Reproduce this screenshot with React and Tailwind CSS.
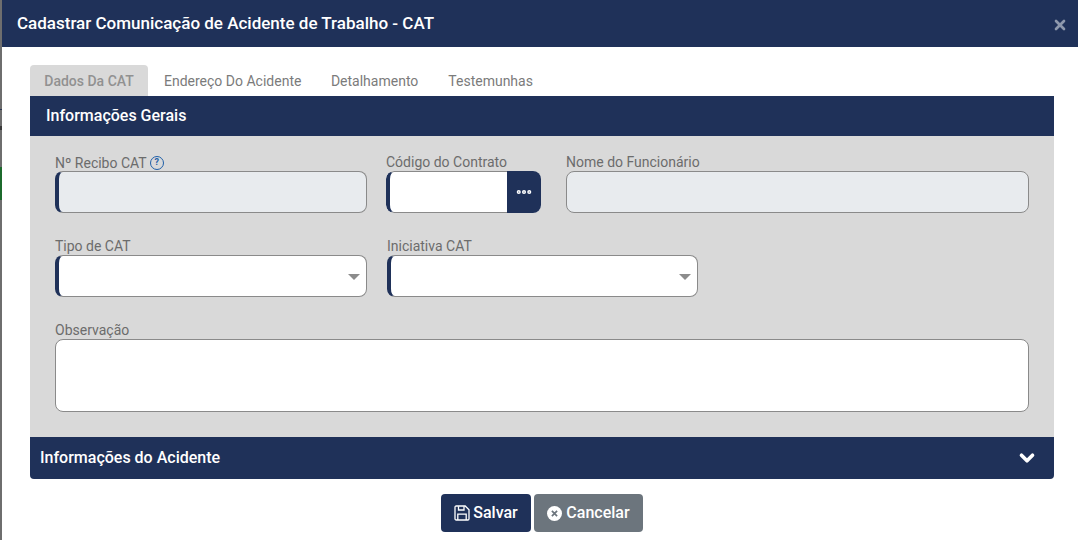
import { ChevronDown, Ellipsis, X } from 'lucide-react'

function Label({ children }) {
  return <label className="block h-[17px] text-sm leading-[17px] text-[#6c6c6c]">{children}</label>
}

function Field({ label, className, children }) {
  return (
    <div className={className}>
      <Label>{label}</Label>
      {children}
    </div>
  )
}

function SelectBox() {
  return (
    <div className="flex h-[42px] items-center justify-end rounded-lg border border-[#8a8a8a] border-l-4 border-l-[#1f3159] bg-white pr-[6px]">
      <span className="mt-px h-0 w-0 border-x-[6px] border-t-[6px] border-x-transparent border-t-[#8c8c8c]" />
    </div>
  )
}

function SaveIcon() {
  return (
    <svg width="16" height="16" viewBox="0 0 16 16" fill="none" stroke="white" strokeWidth="1.3">
      <path d="M1 2.2C1 1.5 1.5 1 2.2 1H11.2L15 4.8V13.8C15 14.5 14.5 15 13.8 15H2.2C1.5 15 1 14.5 1 13.8Z" />
      <path d="M4.5 1.2V5H10V1.2" />
      <path d="M3.8 15V9.2H12.2V15" />
    </svg>
  )
}

function CancelIcon() {
  return (
    <svg width="15" height="15" viewBox="0 0 15 15">
      <circle cx="7.5" cy="7.5" r="7.5" fill="white" />
      <path d="M4.9 4.9L10.1 10.1M10.1 4.9L4.9 10.1" stroke="#6c757d" strokeWidth="1.7" />
    </svg>
  )
}

export default function App() {
  return (
    <div className="flex h-[540px] w-[1078px] overflow-hidden bg-white font-['Roboto',sans-serif]">
      {/* page behind the modal, only a sliver shows */}
      <div className="flex w-[2px] shrink-0 flex-col bg-[#6e6e6e]">
        <div className="mt-[109px] h-px bg-[#2a3550]" />
        <div className="mt-[16px] h-[4px] bg-[#3a3a3a]" />
        <div className="mt-[37px] h-[33px] bg-[#1c6a2c]" />
      </div>

      <div className="flex min-w-0 flex-1 flex-col">
        <header className="flex h-[47px] shrink-0 items-center justify-between bg-[#1f3159] pl-[15px] pr-[10px]">
          <h1 className="text-[17px] font-medium text-white">Cadastrar Comunicação de Acidente de Trabalho - CAT</h1>
          <X size={16} strokeWidth={4} className="mt-[3px] text-[#8e98ac]" />
        </header>

        <main className="flex flex-col pl-[28px] pr-[24px] pt-[18px]">
          <nav className="flex h-[31px] items-stretch text-sm text-[#7b7b7b]">
            <span className="flex w-[118px] items-center justify-center rounded-t bg-[#d9d9d9] font-medium text-[#919191]">Dados Da CAT</span>
            <span className="ml-px flex items-center pl-[15px] pr-[14.5px]">Endereço Do Acidente</span>
            <span className="flex items-center px-[15px]">Detalhamento</span>
            <span className="flex items-center px-[15px]">Testemunhas</span>
          </nav>

          <section className="bg-[#d9d9d9]">
            <h2 className="flex h-[40px] items-center bg-[#1f3159] pl-4 text-base font-medium text-white">Informações Gerais</h2>

            <div className="flex flex-col gap-[25px] pl-[25px] pr-[25px] pt-[18px]">
              <div className="flex">
                <div className="w-[312px]">
                  <div className="flex h-[17px] items-center gap-[3px] text-sm text-[#6c6c6c]">
                    Nº Recibo CAT
                    <span className="flex h-[14px] w-[14px] items-center justify-center rounded-full border border-[#1f5fa8] text-[9px] font-bold text-[#1f5fa8]">?</span>
                  </div>
                  <div className="h-[42px] rounded-lg border border-[#8a8a8a] border-l-4 border-l-[#1f3159] bg-[#e8ebee]" />
                </div>
                <Field label="Código do Contrato" className="ml-[19px] w-[155px]">
                  <div className="flex h-[42px] overflow-hidden rounded-lg bg-white">
                    <div className="flex-1 rounded-l-lg border-y border-l-4 border-y-[#8a8a8a] border-l-[#1f3159]" />
                    <button className="flex w-[34px] items-center justify-center bg-[#1f3159] text-white">
                      <Ellipsis size={18} strokeWidth={3.5} />
                    </button>
                  </div>
                </Field>
                <Field label="Nome do Funcionário" className="ml-[25px] w-[463px]">
                  <div className="h-[42px] rounded-lg border border-[#8a8a8a] bg-[#e8ebee]" />
                </Field>
              </div>

              <div className="flex">
                <Field label="Tipo de CAT" className="w-[312px]">
                  <SelectBox />
                </Field>
                <Field label="Iniciativa CAT" className="ml-[20px] w-[311px]">
                  <SelectBox />
                </Field>
              </div>

              <Field label="Observação">
                <div className="h-[73px] rounded-lg border border-[#8a8a8a] bg-white" />
              </Field>
            </div>

            <div className="h-[25px]" />
          </section>

          <div className="flex h-[42px] items-center justify-between rounded-b bg-[#1f3159] pl-[10px] pr-[16px]">
            <h2 className="text-base font-medium text-white">Informações do Acidente</h2>
            <ChevronDown size={22} strokeWidth={4} className="text-white" />
          </div>

          <div className="mt-[15px] flex justify-center gap-[3px]">
            <button className="flex h-[38px] w-[90px] items-center justify-center gap-[3px] rounded bg-[#1f3159] text-base font-medium text-white">
              <SaveIcon />
              Salvar
            </button>
            <button className="flex h-[38px] w-[109px] items-center justify-center gap-1 rounded bg-[#6c757d] text-base font-medium text-white">
              <CancelIcon />
              Cancelar
            </button>
          </div>
        </main>
      </div>
    </div>
  )
}
